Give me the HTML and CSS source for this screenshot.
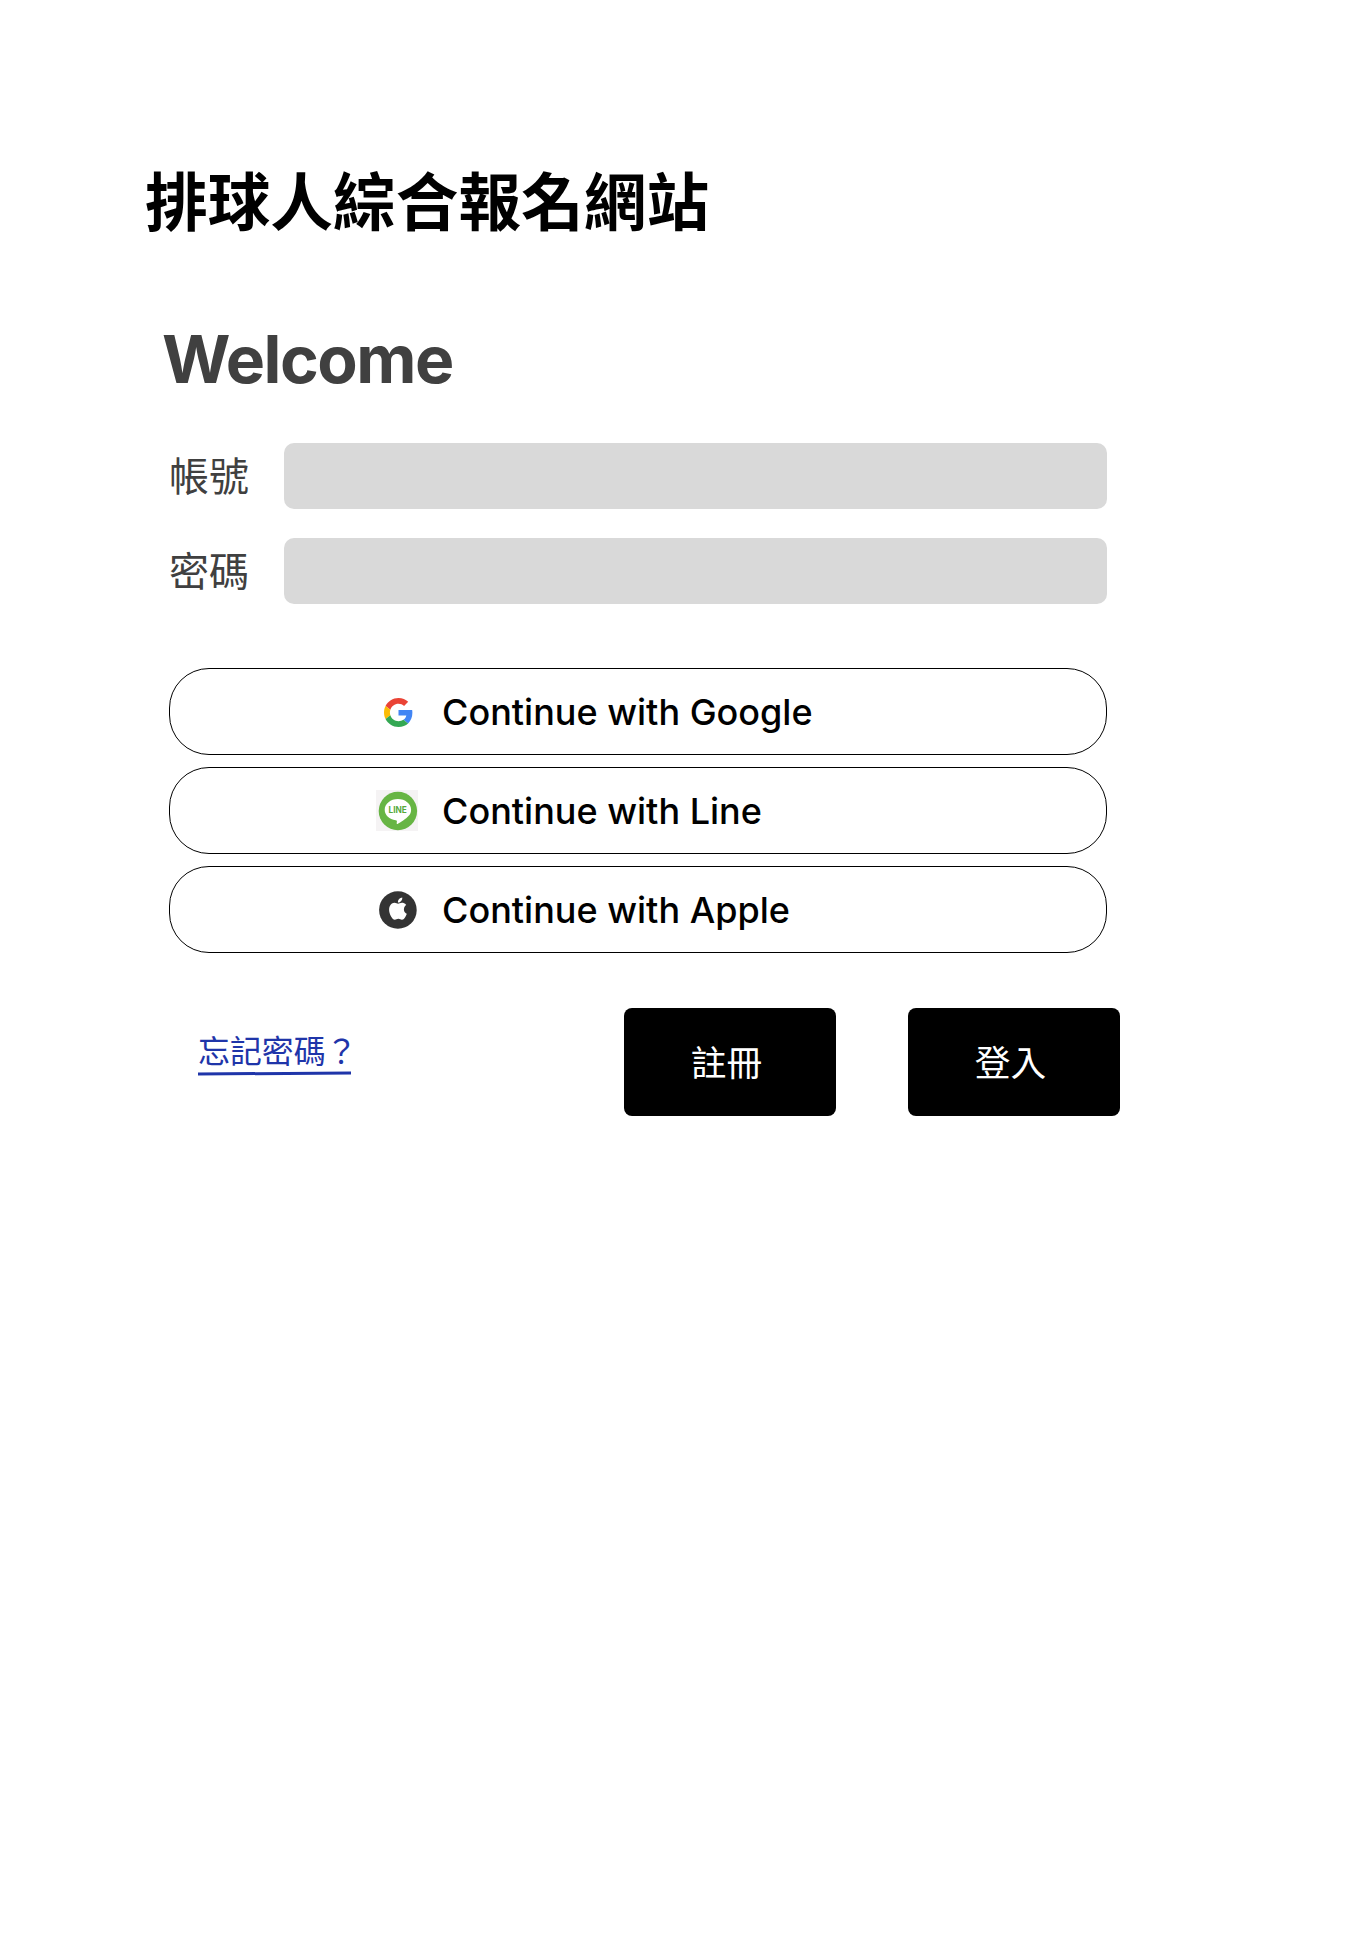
FILE: index.html
```html
<!DOCTYPE html>
<html lang="zh-Hant">
<head>
<meta charset="utf-8">
<title>排球人綜合報名網站</title>
<link rel="stylesheet" href="styles.css">
</head>
<body>
<main class="page">
  <h1 class="site-title">排球人綜合報名網站</h1>
  <h2 class="welcome">Welcome</h2>
  <form class="login">
    <div class="fields">
      <div class="field"><label class="label" for="account">帳號</label><input class="input" id="account" type="text"></div>
      <div class="field"><label class="label" for="password">密碼</label><input class="input" id="password" type="password"></div>
    </div>
    <div class="providers">
      <button class="provider" type="button">
        <span class="icon"><svg width="29" height="29" viewBox="0 0 48 48"><path fill="#EA4335" d="M24 9.5c3.54 0 6.71 1.22 9.21 3.6l6.85-6.85C35.9 2.38 30.47 0 24 0 14.62 0 6.51 5.38 2.56 13.22l7.98 6.19C12.43 13.72 17.74 9.5 24 9.5z"/><path fill="#4285F4" d="M46.98 24.55c0-1.57-.15-3.09-.38-4.55H24v9.02h12.94c-.58 2.96-2.26 5.48-4.78 7.18l7.73 6c4.51-4.18 7.09-10.36 7.09-17.65z"/><path fill="#FBBC05" d="M10.53 28.59c-.48-1.45-.76-2.99-.76-4.59s.27-3.14.76-4.59l-7.98-6.19C.92 16.46 0 20.12 0 24c0 3.88.92 7.54 2.56 10.78l7.97-6.19z"/><path fill="#34A853" d="M24 48c6.48 0 11.93-2.13 15.89-5.81l-7.73-6c-2.15 1.45-4.92 2.3-8.16 2.3-6.26 0-11.57-4.22-13.47-9.91l-7.98 6.19C6.51 42.62 14.62 48 24 48z"/></svg></span>
        <span>Continue with Google</span>
      </button>
      <button class="provider" type="button">
        <span class="icon"><svg width="42" height="41" viewBox="0 0 42 41"><path fill="#f5f3f4" d="M0 0h42v41H0z"/><circle cx="21.9" cy="21" r="19.2" fill="#67b544"/><path fill="#fff" d="M21.9 9C14.6 9 8.7 13.8 8.7 19.7c0 5.300 4.700 9.700 11 10.600 1.500.300 1.300.900 1 2.800-.1.600-.1 1.200.9.800 2.700-1.200 8.600-5.100 10.900-7.800 1.800-1.900 2.600-4 2.600-6.400C35.100 13.800 29.200 9 21.900 9z"/><text class="line-word" x="12.600" y="23.300" textLength="18.300" lengthAdjust="spacingAndGlyphs">LINE</text></svg></span>
        <span>Continue with Line</span>
      </button>
      <button class="provider" type="button">
        <span class="icon"><svg width="42" height="42" viewBox="0 0 42 42"><circle cx="21.900" cy="21" r="18.800" fill="#333"/><g transform="translate(11.100 8.400) scale(.905 .93)"><path fill="#fff" d="M12.152 6.896c-.948 0-2.415-1.078-3.960-1.040-2.040.027-3.910 1.183-4.961 3.014-2.117 3.675-.546 9.103 1.519 12.090 1.013 1.454 2.208 3.090 3.792 3.039 1.520-.065 2.090-.987 3.935-.987 1.831 0 2.350.987 3.960.948 1.637-.026 2.676-1.480 3.676-2.948 1.156-1.688 1.636-3.325 1.662-3.415-.039-.013-3.182-1.221-3.220-4.857-.026-3.040 2.480-4.494 2.597-4.559-1.429-2.090-3.623-2.324-4.390-2.376-2-.156-3.675 1.090-4.610 1.090zM15.530 3.830c.843-1.012 1.400-2.427 1.245-3.830-1.207.052-2.662.805-3.532 1.818-.780.896-1.454 2.338-1.273 3.714 1.338.104 2.715-.688 3.559-1.701"/></g></svg></span>
        <span>Continue with Apple</span>
      </button>
    </div>
    <div class="actions">
      <a class="forgot" href="#"><span>忘記密碼？</span><svg class="rule" width="153" height="5" viewBox="0 0 153 5"><path d="M0 3L153 2" stroke="#1f35a9" stroke-width="3"/></svg></a>
      <button class="action" type="button">註冊</button>
      <button class="action" type="submit">登入</button>
    </div>
  </form>
</main>
</body>
</html>
```
FILE: styles.css
```css
* { box-sizing: border-box; }
body {
  margin: 0;
  background: #fff;
  color: #000;
  font-family: Inter, "Noto Sans CJK TC", sans-serif;
  font-optical-sizing: none;
}
.page { min-height: 1943px; padding: 155px 0 0 145px; }
.site-title {
  margin: 0;
  font-size: 62.7px;
  line-height: 94px;
  font-weight: 700;
}
.welcome {
  margin: 71px 0 0 17px;
  font-size: 66px;
  line-height: 78px;
  letter-spacing: -1.5px;
  font-weight: 700;
  color: #404040;
}
.login { margin: 45px 0 0 24px; width: 951px; }
.fields { display: flex; flex-direction: column; gap: 29px; width: 938px; }
.field { display: flex; align-items: center; height: 66px; }
.label {
  width: 115px;
  padding-top: 2px;
  font-size: 40px;
  line-height: 58px;
  color: #404040;
}
.input {
  flex: 1;
  height: 66px;
  border: 0;
  border-radius: 10px;
  background: #d9d9d9;
  padding: 0 16px;
  font: inherit;
  font-size: 32px;
}
.providers { display: flex; flex-direction: column; gap: 12px; width: 938px; margin-top: 64px; }
.provider {
  display: flex;
  align-items: center;
  gap: 24px;
  height: 87px;
  padding: 0 0 0 206px;
  border: 1px solid #000;
  border-radius: 40px;
  background: #fff;
  color: #000;
  font: 500 36px/44px Inter, sans-serif;
  font-optical-sizing: none;
}
.icon { display: flex; width: 42px; height: 42px; align-items: center; justify-content: center; padding: 1px 0 0 2px; }
.provider:nth-child(n+2) .icon { padding: 0; }
.line-word { font: 700 9px Inter, sans-serif; fill: #55aa3b; }
.actions { display: flex; margin-top: 55px; }
.forgot {
  display: flex;
  flex-direction: column;
  width: 153px;
  margin: 21px 273px 0 29px;
  font-size: 31.9px;
  line-height: 46px;
  color: #1f35a9;
  text-decoration: none;
  white-space: nowrap;
}
.rule { margin-top: -4px; }
.action {
  width: 212px;
  height: 108px;
  padding: 2px 7px 0 0;
  border: 0;
  border-radius: 8px;
  background: #000;
  color: #fff;
  font: 400 35.7px/52px Inter, "Noto Sans CJK TC", sans-serif;
}
.action + .action { margin-left: 72px; }
```
